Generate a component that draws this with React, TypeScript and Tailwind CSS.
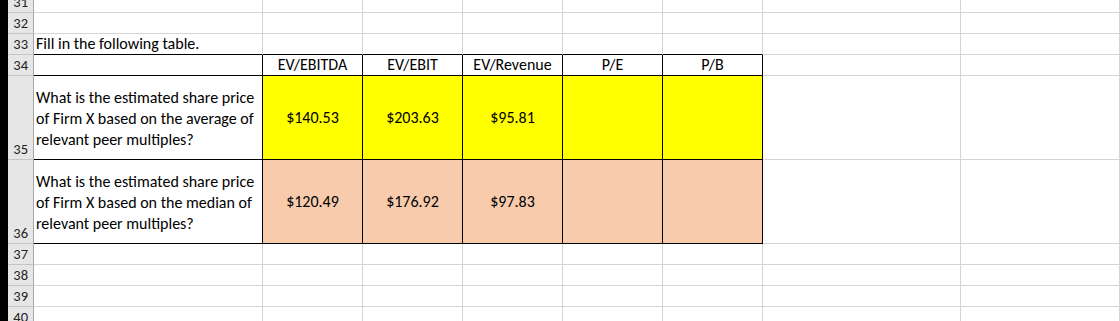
import React from "react";

const headers = ["EV/EBITDA", "EV/EBIT", "EV/Revenue", "P/E", "P/B"];

function RowHeader({ n, h, bottom }: { n: string; h: string; bottom?: boolean }) {
  return (
    <div
      className={`w-[26px] shrink-0 ${h} flex ${bottom ? "items-end pb-[1px]" : "items-center"} justify-end pr-[5px] bg-[#e6e6e6] border-r border-b border-r-[#a6a6a6] border-b-[#c4c4c4] text-[14.5px] leading-[18px] text-[#222]`}
    >
      {n}
    </div>
  );
}

export default function App() {
  const font = { fontFamily: "Carlito, Calibri, 'Open Sans', 'Liberation Sans', sans-serif" };
  const colW = ["w-[229px]", "w-[100px]", "w-[100px]", "w-[100px]", "w-[100px]", "w-[100px]", "w-[198px]", "flex-1"];

  const plainRow = (h: string, n: string, cells?: (i: number) => React.ReactNode, blackB?: boolean, blackR?: boolean) => (
    <div className="flex">
      <RowHeader n={n} h={h} />
      {colW.map((w, i) => {
        const inTable = i <= 5;
        const bb = blackB && inTable ? "border-b-black" : "border-b-[#d4d4d4]";
        const br = blackR && inTable ? "border-r-black" : "border-r-[#d4d4d4]";
        return (
          <div key={i} className={`${w} ${h} shrink-0 border-r border-b ${bb} ${br} flex items-center`}>
            {cells ? cells(i) : null}
          </div>
        );
      })}
    </div>
  );

  const bigRow = (n: string, lines: string[], vals: string[], bg: string) => (
    <div className="flex">
      <RowHeader n={n} h="h-[84px]" bottom />
      {colW.map((w, i) => {
        const inTable = i <= 5;
        const bb = inTable ? "border-b-black" : "border-b-[#d4d4d4]";
        const br = inTable ? "border-r-black" : "border-r-[#d4d4d4]";
        const bgc = i >= 1 && i <= 5 ? bg : "";
        return (
          <div key={i} className={`${w} h-[84px] shrink-0 border-r border-b ${bb} ${br} ${bgc} flex items-center`}>
            {i === 0 ? (
              <div className="pl-[2px] pt-[1px] leading-[21px] text-[16px] text-black">
                {lines.map((l) => (
                  <div key={l} className="whitespace-nowrap">{l}</div>
                ))}
              </div>
            ) : i >= 1 && i <= 5 ? (
              <div className="w-full text-center text-[16px] text-black">{vals[i - 1] ?? ""}</div>
            ) : null}
          </div>
        );
      })}
    </div>
  );

  return (
    <div className="w-[1120px] h-[321px] overflow-hidden bg-white flex" style={font}>
      <div className="w-[8px] h-full bg-black shrink-0" />
      <div className="flex-1 flex flex-col -mt-[8px]">
        {plainRow("h-[21px]", "31")}
        {plainRow("h-[21px]", "32")}
        {plainRow(
          "h-[21px]",
          "33",
          (i) => (i === 0 ? <span className="pl-[2px] text-[16px] text-black whitespace-nowrap">Fill in the following table.</span> : null),
          true,
          false
        )}
        {plainRow(
          "h-[21px]",
          "34",
          (i) => (i >= 1 && i <= 5 ? <div className="w-full text-center text-[16px] text-black">{headers[i - 1]}</div> : null),
          true,
          true
        )}
        {bigRow(
          "35",
          ["What is the estimated share price", "of Firm X based on the average of", "relevant peer multiples?"],
          ["$140.53", "$203.63", "$95.81"],
          "bg-[#ffff00]"
        )}
        {bigRow(
          "36",
          ["What is the estimated share price", "of Firm X based on the median of", "relevant peer multiples?"],
          ["$120.49", "$176.92", "$97.83"],
          "bg-[#f8cbad]"
        )}
        {plainRow("h-[21px]", "37")}
        {plainRow("h-[21px]", "38")}
        {plainRow("h-[21px]", "39")}
        {plainRow("h-[21px]", "40")}
      </div>
    </div>
  );
}
